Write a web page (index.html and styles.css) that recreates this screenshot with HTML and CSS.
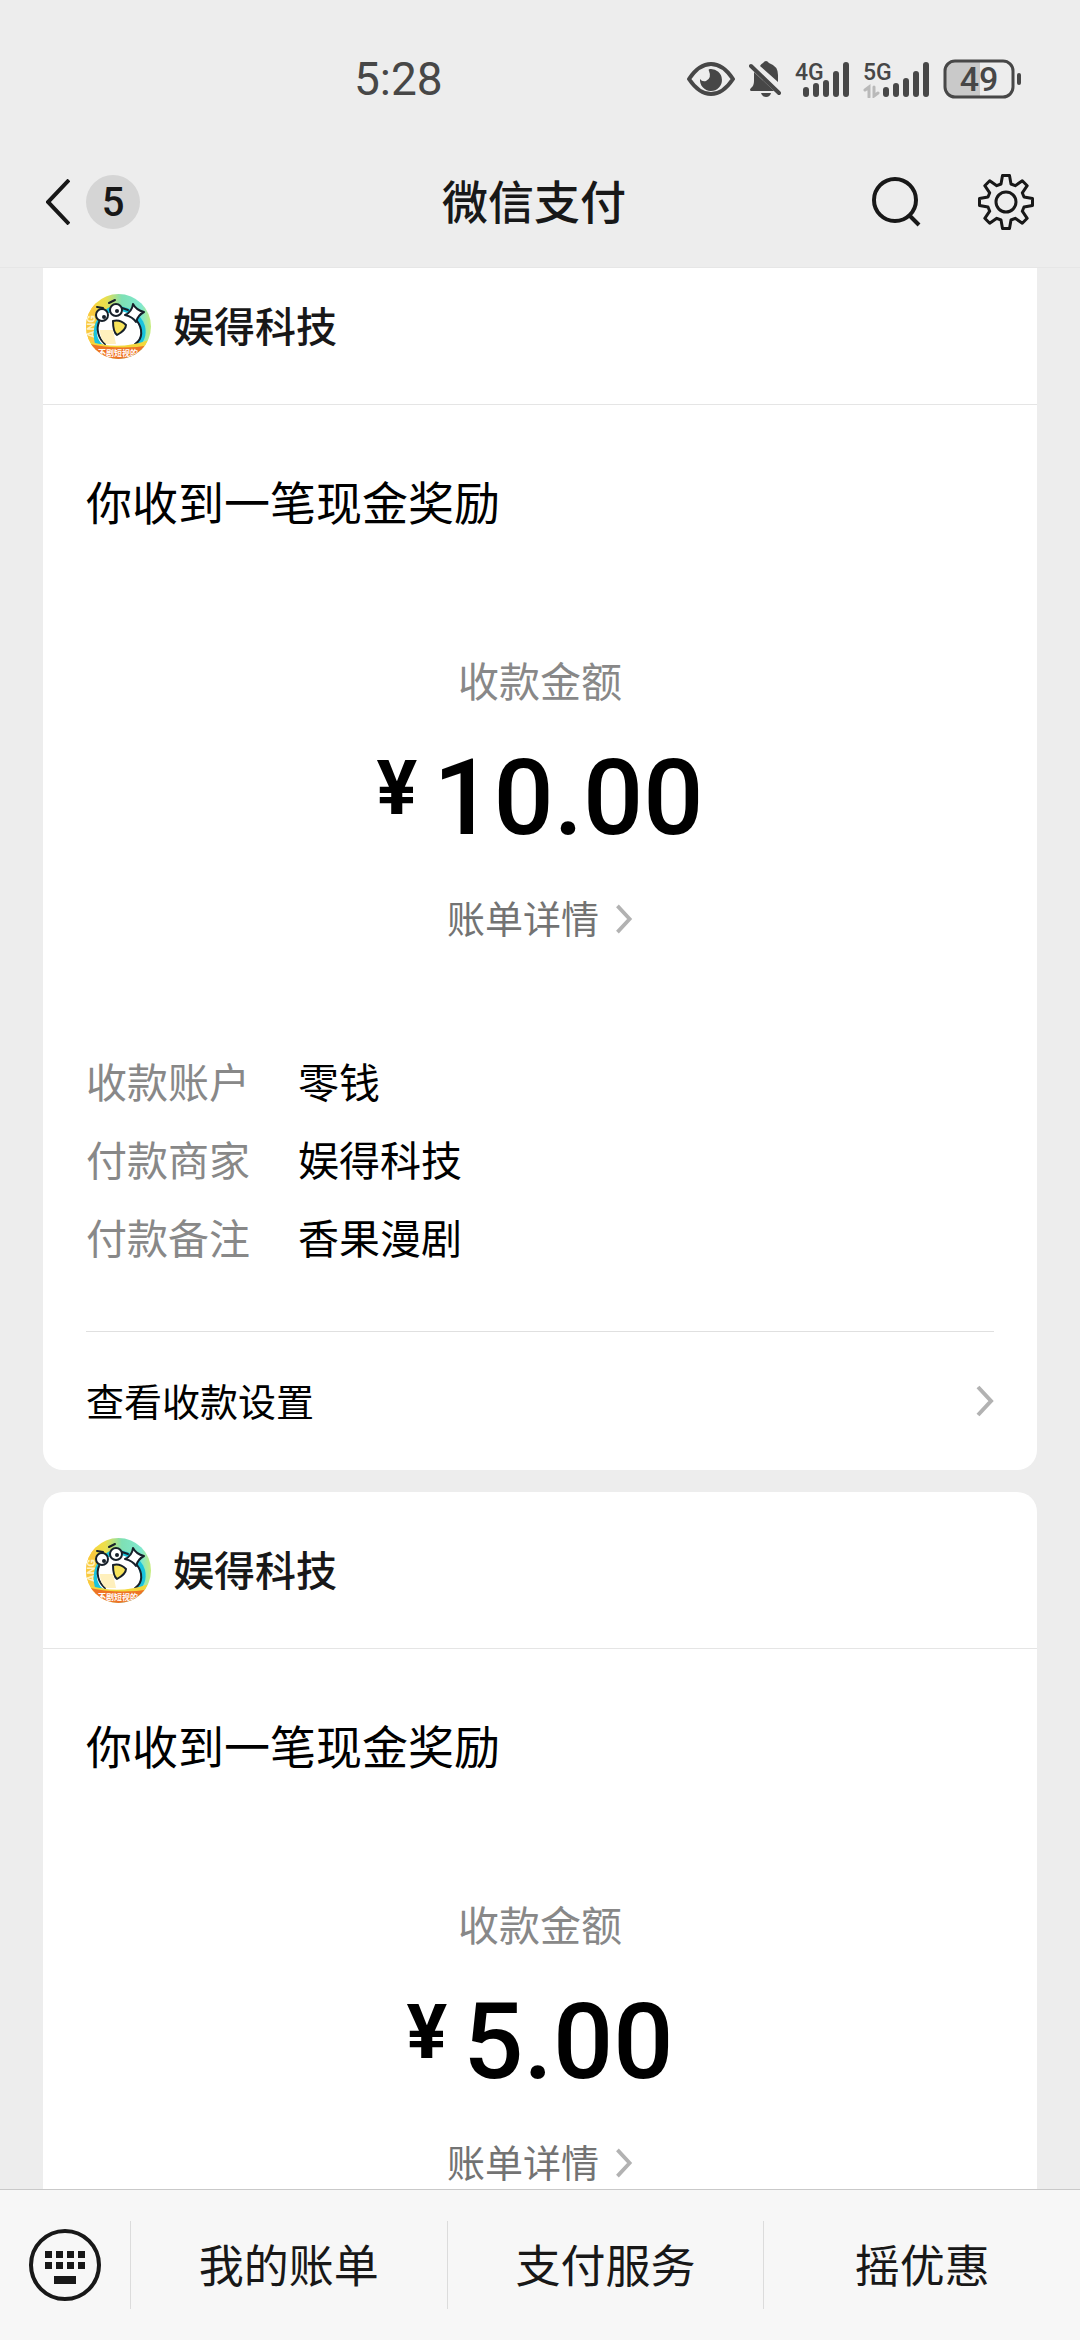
FILE: index.html
```html
<!DOCTYPE html>
<html lang="zh-CN">
<head>
    <meta charset="UTF-8">
    <meta name="viewport" content="width=device-width, initial-scale=1.0">
    <title>微信支付</title>
    <link rel="stylesheet" href="styles.css">
</head>
<body>
    <!-- 公用图形 -->
    <svg class="defs" aria-hidden="true">
        <defs>
            <linearGradient id="avatarBg" x1="0" y1="0" x2="1" y2="0">
                <stop offset="0" stop-color="#fbd43a"/>
                <stop offset="0.3" stop-color="#ecdf4c"/>
                <stop offset="0.55" stop-color="#7ee0b4"/>
                <stop offset="0.85" stop-color="#7fe8cf"/>
                <stop offset="1" stop-color="#c8ec7c"/>
            </linearGradient>
            <clipPath id="avatarClip"><circle cx="32.5" cy="32.5" r="32.5"/></clipPath>
        </defs>
        <symbol id="arrow" viewBox="0 0 18 32">
            <path d="M2 2L15 16L2 30" fill="none" stroke="currentColor" stroke-width="4"/>
        </symbol>
    </svg>

    <div class="status-bar">
        <span class="time">5:28</span>
        <div class="status-icons">
            <svg class="eye" viewBox="0 0 48 34">
                <path d="M2 17Q12 2 24 2T46 17Q36 32 24 32T2 17z" fill="none" stroke="currentColor" stroke-width="4" stroke-linejoin="round"/>
                <path d="M23 7A11 11 0 1 1 13 17Q15 20 19 19Q25 16 22 9Q21 7 23 7z" fill="currentColor"/>
            </svg>
            <svg class="bell" viewBox="0 0 32 38">
                <path d="M5 12L25 31H2Q0 30 2 28Q5 26 5 21z" fill="currentColor"/>
                <path d="M11 6Q12 4 14 3Q17-1 20 3Q29 6 29 15V22z" fill="currentColor"/>
                <path d="M2 6L30 33" stroke="currentColor" stroke-width="4" stroke-linecap="round"/>
                <path d="M12 33H22Q21 37 17 37T12 33z" fill="currentColor"/>
            </svg>
            <svg class="signal" viewBox="0 0 54 38">
                <text x="0" y="20">4G</text>
                <path d="M11 30V34M21 26V34M31 23V34M41 14V34M51 5V34"/>
            </svg>
            <svg class="signal signal-5g" viewBox="0 0 66 38">
                <text x="0" y="20">5G</text>
                <path d="M23 30V34M33 26V34M43 21V34M53 14V34M63 5V34"/>
                <path class="traffic" d="M2 30L6 27V37M15 33L11 36V27"/>
            </svg>
            <svg class="battery" viewBox="0 0 80 40">
                <path d="M12 2H37V38H12Q3 38 3 29V11Q3 2 12 2z" fill="#c9c9c9"/>
                <rect x="2" y="2" width="68" height="36" rx="10" fill="none" stroke="currentColor" stroke-width="3"/>
                <path d="M76 16V24" stroke="currentColor" stroke-width="4" stroke-linecap="round"/>
                <text x="36" y="32" text-anchor="middle">49</text>
            </svg>
        </div>
    </div>

    <header class="nav-bar">
        <button class="back-btn" aria-label="返回">
            <svg class="back-icon" viewBox="0 0 24 46">
                <path d="M23 1L2 23L23 45" fill="none" stroke="currentColor" stroke-width="4"/>
            </svg>
            <span class="badge">5</span>
        </button>
        <h1>微信支付</h1>
        <div class="nav-actions">
            <button aria-label="搜索">
                <svg class="search-icon" viewBox="0 0 50 50">
                    <circle cx="23" cy="23" r="21" fill="none" stroke="currentColor" stroke-width="4"/>
                    <path d="M37 38L47 48" stroke="currentColor" stroke-width="4"/>
                </svg>
            </button>
            <button aria-label="设置">
                <svg class="gear-icon" viewBox="0 0 56 56">
                    <path d="M24.5 1.5H31.5L33 10L37.2 11.7L44.3 6.8L49.2 11.7L44.3 18.8L46 23L54.5 24.5V31.5L46 33L44.3 37.2L49.2 44.3L44.3 49.2L37.2 44.3L33 46L31.5 54.5H24.5L23 46L18.8 44.3L11.7 49.2L6.8 44.3L11.7 37.2L10 33L1.5 31.5V24.5L10 23L11.7 18.8L6.8 11.7L11.7 6.8L18.8 11.7L23 10z" fill="none" stroke="currentColor" stroke-width="3" stroke-linejoin="round"/>
                    <circle cx="28" cy="28" r="10" fill="none" stroke="currentColor" stroke-width="3"/>
                </svg>
            </button>
        </div>
    </header>

    <main class="messages">
        <div class="message-list">
            <article class="card">
                <div class="card-head">
                    <svg class="avatar" viewBox="0 0 65 65">
                        <g id="avatar" clip-path="url(#avatarClip)">
                            <rect width="65" height="65" fill="url(#avatarBg)"/>
                            <path d="M0 8L9 6L12 50H0z" fill="#fac93f"/>
                            <text x="-44" y="9" transform="rotate(-90)" class="avatar-side">ANG</text>
                            <path d="M9 50C5 34 10 22 22 14C34 8 54 16 59 32C61 41 58 48 53 52z" fill="#19c3dd"/>
                            <path d="M15 49C9 42 10 32 15 25C22 16 38 14 45 22C55 29 58 42 50 50C40 56 22 55 15 49z" fill="#fff"/>
                            <path d="M19 50C12 44 10 35 13 28M51 27C57 35 57 45 49 50" fill="none" stroke="#17202a" stroke-width="2" stroke-linecap="round"/>
                            <path d="M14 36H27L30 50H20C16 47 14 42 14 36z" fill="#fff0bd"/>
                            <circle cx="16" cy="21" r="6" fill="#fff" stroke="#17202a" stroke-width="2"/>
                            <circle cx="30" cy="16" r="6" fill="#fff" stroke="#17202a" stroke-width="2"/>
                            <path d="M11 13l6 1M23 9l6-3M36 14l6 2" fill="none" stroke="#17202a" stroke-width="2" stroke-linecap="round"/>
                            <circle cx="18" cy="23" r="2" fill="#17202a"/>
                            <circle cx="31" cy="17" r="2" fill="#17202a"/>
                            <path d="M47 10Q50 16 58 18Q52 21 50 28Q47 23 39 21Q46 18 47 10z" fill="#fff" stroke="#17202a" stroke-width="2" stroke-linejoin="round"/>
                            <path d="M27 27Q34 25 40 31Q40 36 31 41Q27 38 27 27z" fill="#f8e45b" stroke="#17202a" stroke-width="2" stroke-linejoin="round"/>
                            <path d="M2 47Q32 57 63 46V54H0z" fill="#f3d73b"/>
                            <path d="M0 49Q32 57 65 51V65H0z" fill="#ee7426"/>
                            <text x="12" y="62" class="avatar-foot">不剧短视的</text>
                        </g>
                    </svg>
                    <h2>娱得科技</h2>
                </div>
                <div class="card-body">
                    <p class="card-title">你收到一笔现金奖励</p>
                    <div class="amount-box">
                        <p class="amount-label">收款金额</p>
                        <p class="amount"><span class="yen">¥</span>10.00</p>
                        <a href="#" class="bill-link"><span>账单详情</span><svg class="arrow"><use href="#arrow"/></svg></a>
                    </div>
                    <dl class="details">
                        <dt>收款账户</dt><dd>零钱</dd>
                        <dt>付款商家</dt><dd>娱得科技</dd>
                        <dt>付款备注</dt><dd>香果漫剧</dd>
                    </dl>
                    <a href="#" class="setting-link"><span>查看收款设置</span><svg class="arrow arrow-big"><use href="#arrow"/></svg></a>
                </div>
            </article>

            <article class="card">
                <div class="card-head">
                    <svg class="avatar" viewBox="0 0 65 65"><use href="#avatar"/></svg>
                    <h2>娱得科技</h2>
                </div>
                <div class="card-body">
                    <p class="card-title">你收到一笔现金奖励</p>
                    <div class="amount-box">
                        <p class="amount-label">收款金额</p>
                        <p class="amount"><span class="yen">¥</span>5.00</p>
                        <a href="#" class="bill-link"><span>账单详情</span><svg class="arrow"><use href="#arrow"/></svg></a>
                    </div>
                </div>
            </article>
        </div>
    </main>

    <footer class="menu-bar">
        <button class="keyboard-btn" aria-label="键盘">
            <svg class="keyboard-icon" viewBox="0 0 74 74">
                <circle cx="37" cy="37" r="34" fill="none" stroke="currentColor" stroke-width="4"/>
                <path d="M17 23h7v7h-7zM28 23h7v7h-7zM39 23h7v7h-7zM50 23h7v7h-7zM17 34h7v7h-7zM28 34h7v7h-7zM39 34h7v7h-7zM50 34h7v7h-7zM26 48h22v8H26z" fill="currentColor"/>
            </svg>
        </button>
        <button class="menu-item">我的账单</button>
        <button class="menu-item">支付服务</button>
        <button class="menu-item">摇优惠</button>
    </footer>
</body>
</html>
```
FILE: styles.css
```css
* {
    box-sizing: border-box;
}
body {
    margin: 0;
    height: 100vh;
    display: flex;
    flex-direction: column;
    background-color: #ededed;
    color: #181818;
    font-family: "Noto Sans CJK SC", "Noto Sans", sans-serif;
}
h1, h2, p, dl, dd {
    margin: 0;
}
button {
    padding: 0;
    border: none;
    background: none;
    color: inherit;
    font: inherit;
    cursor: pointer;
}
a {
    color: inherit;
    text-decoration: none;
}
svg {
    display: block;
    flex: none;
}
.defs {
    position: absolute;
    width: 0;
    height: 0;
}

/* 状态栏 */
.status-bar {
    flex: none;
    height: 136px;
    padding: 22px 57px 0 354px;
    display: flex;
    align-items: center;
    justify-content: space-between;
    color: #474747;
    font-family: Roboto, sans-serif;
}
.time {
    font-size: 46px;
}
.status-icons {
    display: flex;
    align-items: center;
}
.status-icons text {
    fill: currentColor;
    font-weight: 500;
}
.eye {
    width: 48px;
    height: 34px;
    margin-right: 14px;
}
.bell {
    width: 32px;
    height: 38px;
    margin-right: 14px;
}
.signal {
    width: 54px;
    height: 38px;
    margin-right: 14px;
    font-size: 23px;
}
.signal path {
    fill: none;
    stroke: currentColor;
    stroke-width: 6;
    stroke-linecap: round;
}
.signal-5g {
    width: 66px;
}
.signal .traffic {
    stroke: #b9b9b9;
    stroke-width: 3;
}
.battery {
    width: 80px;
    height: 40px;
    font-size: 34px;
}

/* 标题栏 */
.nav-bar {
    flex: none;
    height: 132px;
    padding: 0 46px;
    display: grid;
    grid-template-columns: 1fr auto 1fr;
    align-items: center;
    border-bottom: 1px solid #e6e6e6;
}
.nav-bar h1 {
    padding: 0 12px 6px 0;
    font-size: 46px;
    font-weight: 500;
    line-height: 60px;
}
.back-btn {
    display: flex;
    align-items: center;
    gap: 16px;
}
.back-icon {
    width: 24px;
    height: 46px;
}
.badge {
    width: 54px;
    height: 54px;
    border-radius: 50%;
    background-color: #d5d5d5;
    font-family: Roboto, sans-serif;
    font-size: 40px;
    font-weight: 500;
    line-height: 56px;
    text-align: center;
}
.nav-actions {
    display: flex;
    align-items: center;
    justify-content: flex-end;
    gap: 56px;
}
.search-icon {
    width: 50px;
    height: 50px;
}
.gear-icon {
    width: 56px;
    height: 56px;
}

/* 消息列表 */
.messages {
    flex: 1;
    min-height: 0;
    overflow: hidden;
}
.message-list {
    margin-top: -20px;
    padding: 0 43px;
    display: flex;
    flex-direction: column;
    gap: 22px;
}
.card {
    border-radius: 20px;
    background-color: #fff;
}
.card-head {
    height: 157px;
    padding: 0 43px;
    display: flex;
    align-items: center;
    gap: 22px;
    border-bottom: 1px solid #e5e5e5;
}
.avatar {
    width: 65px;
    height: 65px;
}
.avatar-side {
    fill: #fff3c4;
    font-family: Roboto, sans-serif;
    font-size: 11px;
    font-weight: 700;
}
.avatar-foot {
    fill: #fff;
    font-size: 8px;
    font-weight: 700;
}
.card-head h2 {
    padding-bottom: 4px;
    font-size: 41px;
    font-weight: 500;
    line-height: 60px;
}
.card-body {
    padding: 65px 43px 0;
    color: #000;
}
.card-title {
    font-size: 46px;
    line-height: 60px;
}
.amount-box {
    margin-top: 119px;
    display: flex;
    flex-direction: column;
    align-items: center;
}
.amount-label {
    color: #888;
    font-size: 41px;
    line-height: 60px;
}
.amount {
    margin: 35px 0 37px;
    display: flex;
    gap: 16px;
    font-family: Roboto, sans-serif;
    font-size: 106px;
    font-weight: 500;
    line-height: 108px;
}
.yen {
    font-size: 76px;
    font-weight: 700;
    line-height: 88px;
}
.bill-link {
    display: flex;
    align-items: center;
    gap: 16px;
    color: #737373;
    font-size: 38px;
    line-height: 56px;
}
.bill-link span,
.setting-link span {
    padding-bottom: 4px;
}
.arrow {
    width: 18px;
    height: 30px;
    color: #b2b2b2;
}
.arrow-big {
    height: 34px;
}
.details {
    margin-top: 92px;
    padding-bottom: 56px;
    display: grid;
    grid-template-columns: 212px 1fr;
    border-bottom: 1px solid #e0e0e0;
    font-size: 41px;
    line-height: 78px;
}
.details dt {
    color: #888;
}
.setting-link {
    height: 138px;
    display: flex;
    align-items: center;
    justify-content: space-between;
    font-size: 38px;
}
/* 最后一张卡片延伸到底部菜单下方 */
.card:last-child {
    padding-bottom: 92px;
}

/* 底部菜单 */
.menu-bar {
    flex: none;
    height: 151px;
    display: flex;
    align-items: center;
    border-top: 1px solid #c9c9c9;
    background-color: #f7f7f7;
}
.keyboard-btn {
    width: 130px;
    display: flex;
    justify-content: center;
}
.keyboard-icon {
    width: 74px;
    height: 74px;
}
.menu-item {
    flex: 1;
    height: 88px;
    padding-bottom: 4px;
    border-left: 1px solid #dcdcdc;
    font-size: 45px;
}
```
